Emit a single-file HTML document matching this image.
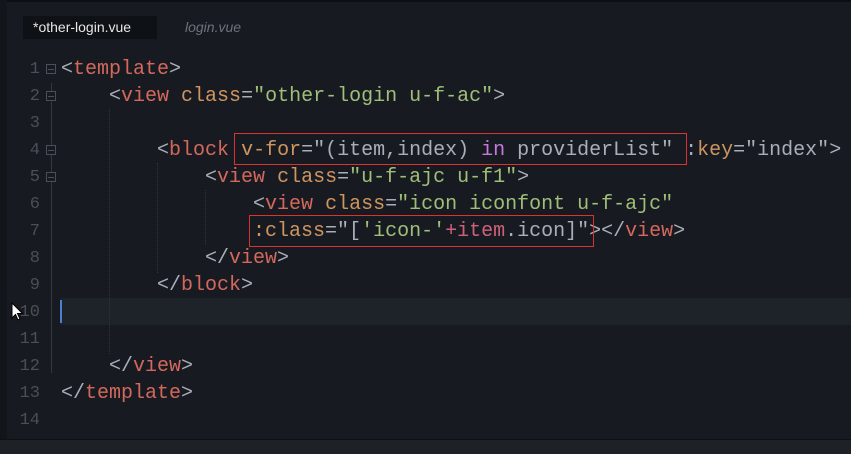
<!DOCTYPE html>
<html><head><meta charset="utf-8"><style>
html,body{margin:0;padding:0;width:851px;height:454px;overflow:hidden;background:#171b21;}
body{position:relative;font-family:"Liberation Mono",monospace;}
.top{position:absolute;left:0;top:0;width:851px;height:2px;background:#0c0f13;}
.left{position:absolute;left:0;top:0;width:7px;height:440px;background:#121519;}
.bottom{position:absolute;left:0;top:439px;width:851px;height:15px;background:#1e2227;border-top:1px solid #0e1114;}
.tab{position:absolute;top:16px;height:23px;line-height:23px;font-family:"Liberation Sans",sans-serif;font-size:14px;}
.t1{left:23px;width:134px;background:#0e1115;color:#e6e6e6;padding-left:10px;box-sizing:border-box;}
.t2{left:185px;color:#6c717a;font-style:italic;}
.hl{position:absolute;left:60px;top:298px;width:791px;height:27px;background:#1e2229;}
.cur{position:absolute;left:60px;top:300px;width:2px;height:23px;background:#4a7fd4;}
.ln{position:absolute;left:0;width:40px;text-align:right;font-size:17px;color:#4a4f57;height:27px;line-height:27px;}
.fold{position:absolute;left:46px;width:8px;height:8px;border:1px solid #4a4f57;}
.fold:after{content:"";position:absolute;left:1px;top:3.5px;width:6px;height:1px;background:#4a4f57;}
.code{position:absolute;left:61px;white-space:pre;font-size:20px;height:27px;line-height:28px;color:#a9afb8;}
.t{color:#d4685c}.a{color:#cf9560}.s{color:#9fbf78}.k{color:#c678dd}.p{color:#d0607a}
.box{position:absolute;border:1px solid #d9342f;}
.g{position:absolute;width:0;border-left:1px dotted #30353d;}
</style></head><body>
<div class="top"></div><div class="left"></div>
<div class="tab t1">*other-login.vue</div>
<div class="tab t2">login.vue</div>
<div class="hl"></div>
<div class="g" style="left:109px;top:109px;height:245px"></div>
<div class="g" style="left:157px;top:163px;height:110px"></div>
<div class="g" style="left:205px;top:190px;height:55px"></div>
<div style="position:absolute;left:51px;top:83px;width:0;height:290px;border-left:1px solid #33383f"></div>
<div class="ln" style="top:56px">1</div><div class="ln" style="top:83px">2</div><div class="ln" style="top:110px">3</div><div class="ln" style="top:137px">4</div><div class="ln" style="top:164px">5</div><div class="ln" style="top:191px">6</div><div class="ln" style="top:218px">7</div><div class="ln" style="top:245px">8</div><div class="ln" style="top:272px">9</div><div class="ln" style="top:299px">10</div><div class="ln" style="top:326px">11</div><div class="ln" style="top:353px">12</div><div class="ln" style="top:380px">13</div><div class="ln" style="top:407px">14</div>
<div class="fold" style="top:64px;background:#171b21"></div><div class="fold" style="top:91px;background:#171b21"></div><div class="fold" style="top:145px;background:#171b21"></div><div class="fold" style="top:172px;background:#171b21"></div>
<div class="code" style="top:56px">&lt;<span class="t">template</span>&gt;</div>
<div class="code" style="top:83px">    &lt;<span class="t">view</span> <span class="a">class</span>=<span class="s">"other-login u-f-ac"</span>&gt;</div>
<div class="code" style="top:137px">        &lt;<span class="t">block</span> <span class="a">v-for</span>="(item,index) <span class="k">in</span> providerList" :<span class="a">key</span>="index"&gt;</div>
<div class="code" style="top:164px">            &lt;<span class="t">view</span> <span class="a">class</span>=<span class="s">"u-f-ajc u-f1"</span>&gt;</div>
<div class="code" style="top:191px">                &lt;<span class="t">view</span> <span class="a">class</span>=<span class="s">"icon iconfont u-f-ajc"</span></div>
<div class="code" style="top:218px">                <span class="a">:class</span>="[<span class="s">'icon-'</span><span class="p">+item</span>.icon]"&gt;&lt;/<span class="t">view</span>&gt;</div>
<div class="code" style="top:245px">            &lt;/<span class="t">view</span>&gt;</div>
<div class="code" style="top:272px">        &lt;/<span class="t">block</span>&gt;</div>
<div class="code" style="top:353px">    &lt;/<span class="t">view</span>&gt;</div>
<div class="code" style="top:380px">&lt;/<span class="t">template</span>&gt;</div>
<div class="cur"></div>
<div class="box" style="left:234px;top:133px;width:451px;height:30px"></div>
<div class="box" style="left:249px;top:215px;width:343px;height:30px"></div>
<svg style="position:absolute;left:11px;top:302px" width="14" height="20" viewBox="0 0 14 20"><path d="M1 1 L1 16 L4.5 12.5 L7 18 L9 17 L6.5 11.5 L11.5 11.5 Z" fill="#fff" stroke="#000" stroke-width="1"/></svg>
<div class="bottom"></div>
</body></html>
